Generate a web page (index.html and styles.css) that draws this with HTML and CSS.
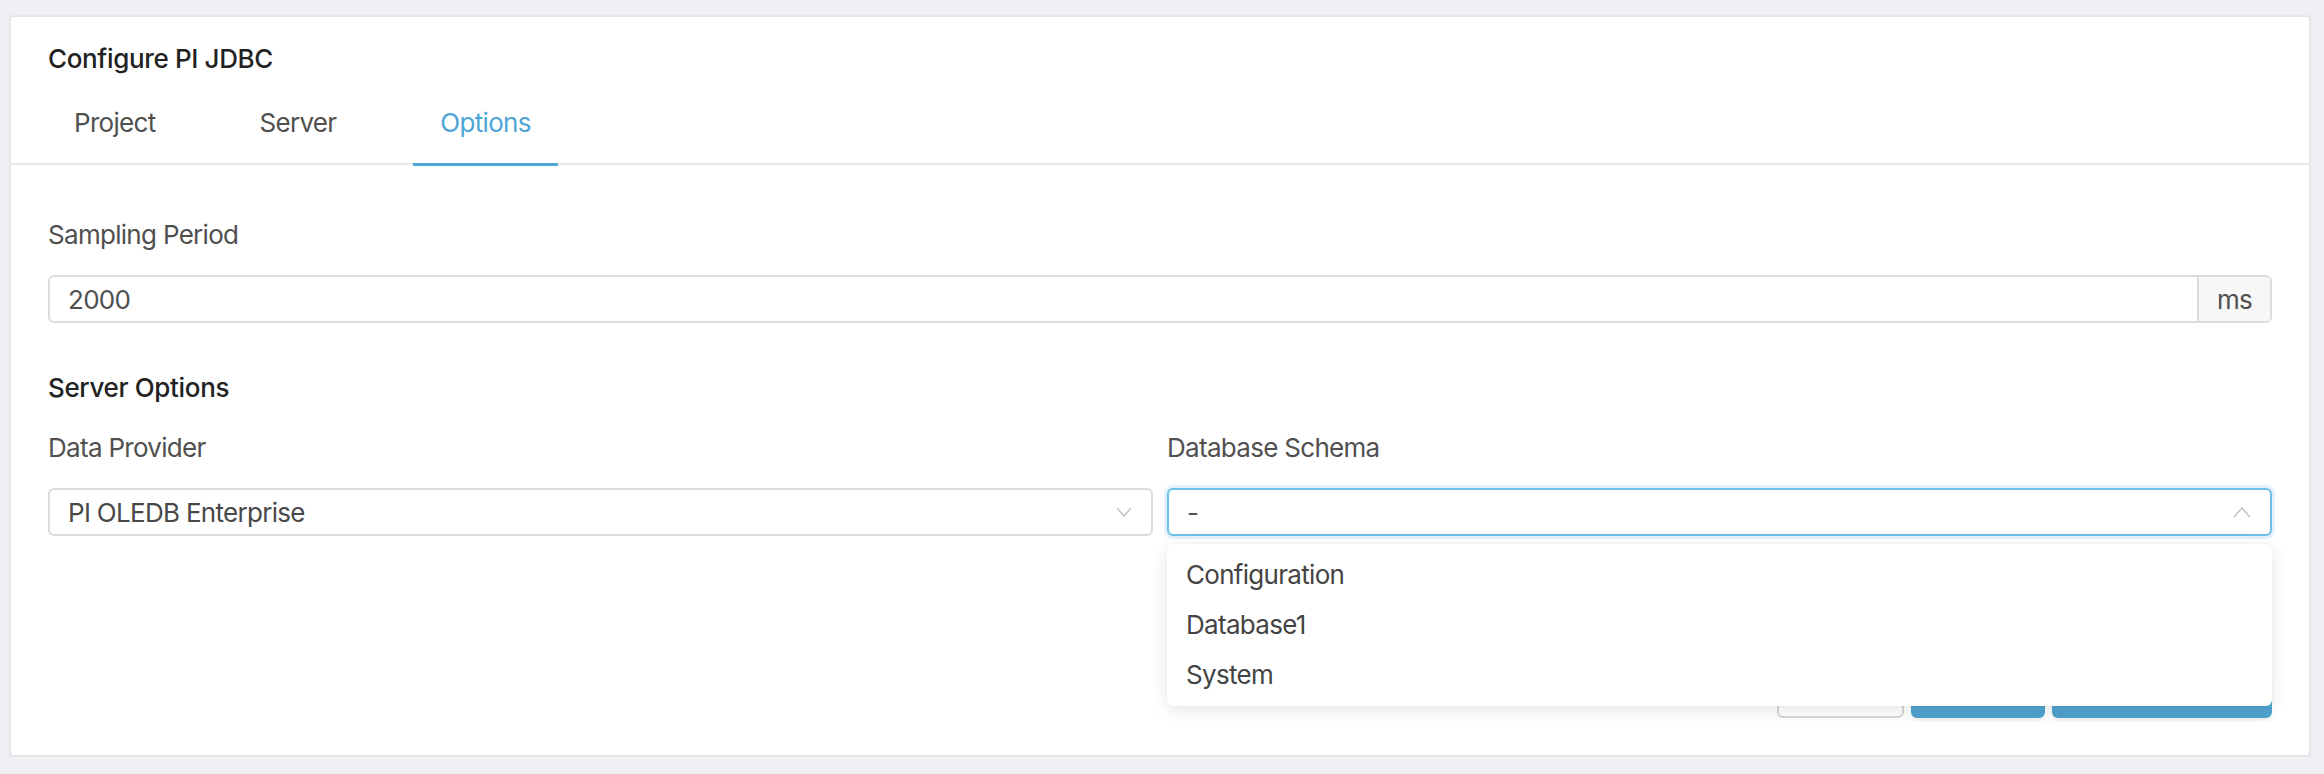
FILE: index.html
```html
<!DOCTYPE html>
<html lang="en">
<head>
<meta charset="utf-8">
<title>Configure PI JDBC</title>
<link rel="stylesheet" href="styles.css">
</head>
<body>
  <div class="card">
    <header class="card-head">
      <h1 class="title">Configure PI JDBC</h1>
      <nav class="tabs">
        <a class="tab">Project</a>
        <a class="tab">Server</a>
        <a class="tab active">Options</a>
      </nav>
    </header>
    <section class="card-body">
      <div class="field">
        <label class="label">Sampling Period</label>
        <div class="input-group">
          <div class="input">2000</div>
          <div class="addon">ms</div>
        </div>
      </div>

      <h2 class="section-title">Server Options</h2>

      <div class="grid">
        <div class="field">
          <label class="label">Data Provider</label>
          <div class="select">
            <span class="value">PI OLEDB Enterprise</span>
            <svg class="chev" width="16" height="10" viewBox="0 0 16 10"><polyline points="1,1 8,9 15,1" fill="none" stroke="#c2c2c2" stroke-width="1.5"/></svg>
          </div>
        </div>
        <div class="field">
          <label class="label">Database Schema</label>
          <div class="select-wrap">
            <div class="select focused">
              <span class="value">-</span>
              <svg class="chev" width="18" height="11" viewBox="0 0 18 11"><polyline points="1,10 9,1 17,10" fill="none" stroke="#c2c2c2" stroke-width="1.5"/></svg>
            </div>
            <ul class="dropdown">
              <li class="option">Configuration</li>
              <li class="option">Database1</li>
              <li class="option">System</li>
            </ul>
          </div>
        </div>
      </div>

      <div class="actions">
        <button class="btn btn-default" aria-label="Cancel"></button>
        <button class="btn btn-primary btn-mid" aria-label="Back"></button>
        <button class="btn btn-primary btn-wide" aria-label="Save"></button>
      </div>
    </section>
  </div>
</body>
</html>
```

FILE: styles.css
```css
* { box-sizing: border-box; }

html, body {
  margin: 0;
  height: 774px;
}

body {
  padding: 15px 13px 17px 9px;
  background: #eff0f4;
  font-family: Inter, "Noto Sans", "Liberation Sans", sans-serif;
  font-size: 26px;
  letter-spacing: -0.7px;
  color: #505050;
}

.card {
  background: #ffffff;
  border: 2px solid #e5e6ea;
  border-radius: 4px;
}

/* header */
.card-head {
  padding: 22px 37px 0;
  border-bottom: 2px solid #e8e8e8;
}

.title {
  margin: 0;
  font-size: 26px;
  line-height: 40px;
  font-weight: 500;
  letter-spacing: -0.35px;
  color: #222222;
}

.tabs {
  display: flex;
  gap: 50px;
  margin-top: 4px;
  height: 80px;
  margin-left: -1px;
}

.tab {
  position: relative;
  display: flex;
  align-items: center;
  padding: 0 27px;
  color: #505050;
  line-height: 40px;
}

.tab.active {
  color: #4ea5d6;
}

.tab.active::after {
  content: "";
  position: absolute;
  left: 0;
  right: 0;
  bottom: -3px;
  height: 3px;
  background: #4ea5d6;
}

/* body */
.card-body {
  padding: 50px 37px 37px;
}

.label {
  display: block;
  line-height: 40px;
  margin-bottom: 20px;
  color: #505050;
}

.input-group {
  display: flex;
  height: 48px;
  border: 2px solid #dcdcdc;
  border-radius: 6px;
  overflow: hidden;
}

.input {
  flex: 1;
  display: flex;
  align-items: center;
  padding: 0 18px;
  color: #505050;
}

.addon {
  width: 73px;
  display: flex;
  align-items: center;
  justify-content: center;
  background: #f7f7f7;
  border-left: 2px solid #dcdcdc;
  color: #505050;
}

.section-title {
  margin: 45px 0 20px;
  font-size: 26px;
  line-height: 40px;
  font-weight: 500;
  letter-spacing: -0.35px;
  color: #222222;
}

.grid {
  display: grid;
  grid-template-columns: 1fr 1fr;
  column-gap: 14px;
}

.select-wrap {
  position: relative;
}

.select {
  height: 48px;
  display: flex;
  align-items: center;
  justify-content: space-between;
  padding: 0 19px 0 18px;
  border: 2px solid #dcdcdc;
  border-radius: 6px;
  color: #484848;
  background: #ffffff;
}

.select.focused {
  border-color: #6cbfe6;
  box-shadow: 0 0 0 3px rgba(108, 191, 230, 0.2);
  color: #505050;
}

.chev { display: block; }

.dropdown {
  position: absolute;
  left: 0;
  right: 0;
  top: calc(100% + 8px);
  margin: 0;
  padding: 6px 0;
  list-style: none;
  background: #ffffff;
  border-radius: 6px;
  box-shadow: 0 4px 18px rgba(0, 0, 0, 0.10), 0 0 2px rgba(0, 0, 0, 0.05);
  z-index: 10;
}

.option {
  height: 50px;
  line-height: 50px;
  padding: 0 19px;
  color: #444444;
}

/* actions */
.actions {
  display: flex;
  justify-content: flex-end;
  gap: 7px;
  margin-top: 138px;
}

.btn {
  height: 44px;
  border-radius: 6px;
  font: inherit;
  padding: 0;
}

.btn-default {
  width: 127px;
  background: #ffffff;
  border: 2px solid #d6d6d6;
}

.btn-primary {
  background: #4fa3cf;
  border: none;
  box-shadow: 0 3px 2px rgba(0, 0, 0, 0.05);
}

.btn-mid { width: 134px; }
.btn-wide { width: 220px; }
```
